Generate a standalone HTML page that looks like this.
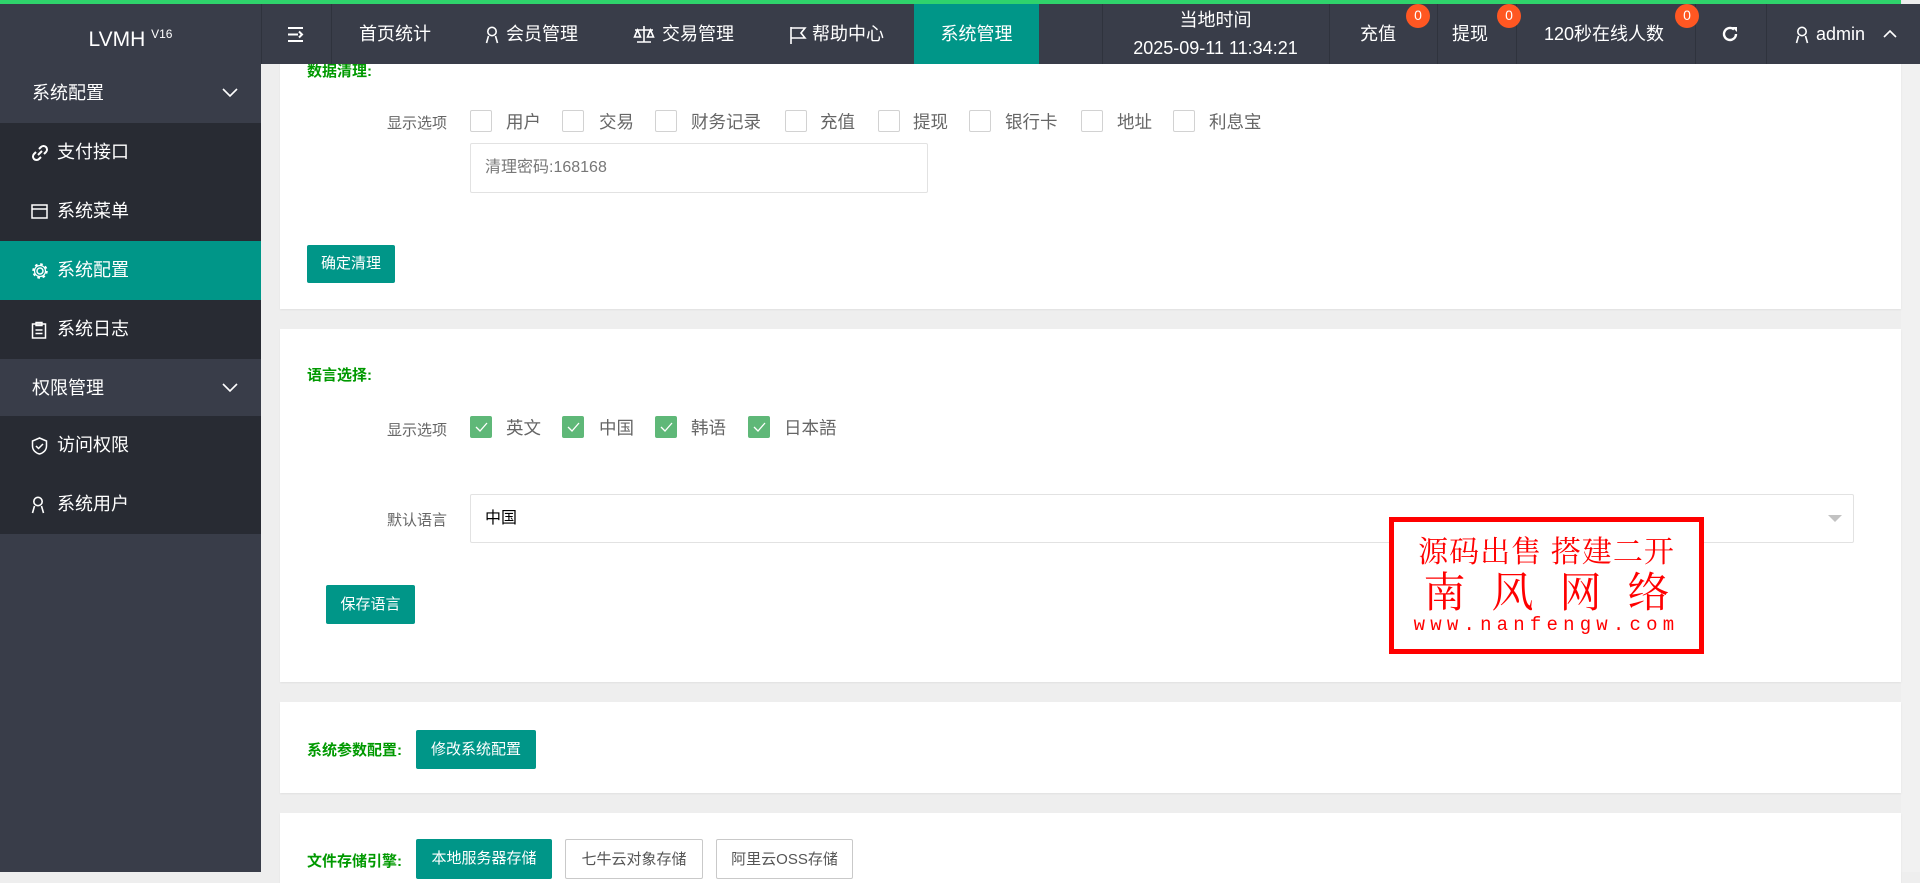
<!DOCTYPE html>
<html><head><meta charset="utf-8"><style>
*{box-sizing:border-box;margin:0;padding:0}
body{width:1920px;height:872px;overflow:hidden;background:#eee;font-family:"Liberation Sans","Noto Sans CJK SC",sans-serif;position:relative;color:#333}
.a{position:absolute}
.top{left:0;top:0;width:1901px;height:4px;background:#2fd36c;z-index:20}
.hdr{left:0;top:4px;width:1920px;height:60px;background:#393d49;color:#fff;font-size:18px;z-index:20}
.hi{position:absolute;top:0;height:60px;line-height:60px;white-space:nowrap}
.sep{position:absolute;top:0;width:1px;height:60px;background:#2f333d}
.side{left:0;top:64px;width:261px;height:808px;background:#393d49;z-index:20}
.si{position:absolute;left:0;width:261px;height:59px;line-height:59px;color:#fff;font-size:18px;padding-left:32px;background:#282b33}
.si.g{background:#393d49}
.si.act{background:#009688}
.si svg{position:absolute;left:31px;top:21px}
.si span{position:absolute;left:57px}
.card{background:#fff;left:280px;width:1621px;box-shadow:0 1px 2px rgba(0,0,0,.06)}
.lbl{position:absolute;font-size:15px;color:#666}
.cb{position:absolute;width:22px;height:22px;border:1px solid #d2d2d2;border-radius:2px;background:#fff}
.cb.on{background:#5fb878;border-color:#5fb878}
.ct{position:absolute;font-size:17.5px;color:#666}
.g1{position:absolute;color:#009900;font-weight:bold;font-size:15px}
.btn{position:absolute;background:#009688;color:#fff;font-size:15px;text-align:center;border-radius:2px}
.btn2{position:absolute;background:#fff;color:#555;border:1px solid #c9c9c9;font-size:15px;text-align:center;border-radius:2px}
.badge{position:absolute;top:0;width:24px;height:24px;border-radius:12px;background:#ff5722;color:#fff;font-size:14px;text-align:center;line-height:22px;z-index:5}
</style></head><body>
<div class="a top"></div>
<div class="a hdr">
  <div class="hi" style="left:0;width:261px;text-align:center;font-size:21px">LVMH <sup style="font-size:12px;vertical-align:8px">V16</sup></div>
  <div class="sep" style="left:261px"></div>
  <div class="sep" style="left:331px"></div>
  <svg class="a" style="left:287px;top:22px" width="18" height="17" viewBox="0 0 18 17"><path d="M1 2h15M1 8.5h10M1 15h15M12 5.5l3 3-3 3" stroke="#fff" stroke-width="2" fill="none"/></svg>
  <div class="hi" style="left:359px">首页统计</div>
  <svg class="a" style="left:485px;top:22px" width="14" height="18" viewBox="0 0 14 18"><circle cx="7" cy="5.5" r="4.2" stroke="#fff" stroke-width="1.6" fill="none"/><path d="M1.5 17l2-7M12.5 17l-2-7" stroke="#fff" stroke-width="1.6"/></svg>
  <div class="hi" style="left:506px">会员管理</div>
  <svg class="a" style="left:633px;top:21px" width="22" height="19" viewBox="0 0 22 19"><path d="M11 1v16M4 17h14M2 5h18M4.5 5l-3 7h6zM17.5 5l-3 7h6z" stroke="#fff" stroke-width="1.6" fill="none"/></svg>
  <div class="hi" style="left:662px">交易管理</div>
  <svg class="a" style="left:789px;top:22px" width="18" height="18" viewBox="0 0 18 18"><path d="M2 1v17M2 2h14l-4 5 4 5H2" stroke="#fff" stroke-width="1.6" fill="none"/></svg>
  <div class="hi" style="left:812px">帮助中心</div>
  <div class="hi" style="left:914px;width:125px;background:#009688;text-align:center">系统管理</div>
  <div class="sep" style="left:1102px"></div>
  <div class="hi" style="left:1102px;width:227px;text-align:center;line-height:28px;padding-top:2px">当地时间<br>2025-09-11 11:34:21</div>
  <div class="sep" style="left:1329px"></div>
  <div class="hi" style="left:1360px">充值</div><div class="badge" style="left:1406px">0</div>
  <div class="sep" style="left:1437px"></div>
  <div class="hi" style="left:1452px">提现</div><div class="badge" style="left:1497px">0</div>
  <div class="sep" style="left:1516px"></div>
  <div class="hi" style="left:1544px">120秒在线人数</div><div class="badge" style="left:1675px">0</div>
  <div class="sep" style="left:1695px"></div>
  <svg class="a" style="left:1721px;top:21px" width="18" height="18" viewBox="0 0 18 18"><path d="M15 9a6 6 0 1 1-2-4.5" stroke="#fff" stroke-width="2.4" fill="none"/><path d="M11 2h5v5z" fill="#fff"/></svg>
  <div class="sep" style="left:1766px"></div>
  <svg class="a" style="left:1795px;top:22px" width="14" height="18" viewBox="0 0 14 18"><circle cx="7" cy="5.5" r="4.2" stroke="#fff" stroke-width="1.6" fill="none"/><path d="M1.5 17l2-7M12.5 17l-2-7" stroke="#fff" stroke-width="1.6"/></svg>
  <div class="hi" style="left:1816px">admin</div>
  <svg class="a" style="left:1883px;top:25px" width="14" height="9" viewBox="0 0 14 9"><path d="M1 8l6-6 6 6" stroke="#fff" stroke-width="1.6" fill="none"/></svg>
</div>
<div class="a side">
  <div class="si g" style="top:0">系统配置<svg style="left:222px;top:24px" width="16" height="10" viewBox="0 0 16 10"><path d="M1 1l7 7 7-7" stroke="#fff" stroke-width="1.6" fill="none"/></svg></div>
  <div class="si" style="top:59px"><svg width="18" height="18" viewBox="0 0 18 18"><path d="M7 11l4-4M8 5l2-2a3 3 0 0 1 5 5l-2 2M10 13l-2 2a3 3 0 0 1-5-5l2-2" stroke="#fff" stroke-width="2" fill="none"/></svg><span>支付接口</span></div>
  <div class="si" style="top:118px"><svg width="17" height="17" viewBox="0 0 17 17"><rect x="1" y="2" width="15" height="13" stroke="#fff" stroke-width="1.5" fill="none"/><path d="M1 6h15" stroke="#fff" stroke-width="1.5"/></svg><span>系统菜单</span></div>
  <div class="si act" style="top:177px"><svg width="18" height="18" viewBox="0 0 18 18"><circle cx="9" cy="9" r="3" stroke="#fff" stroke-width="1.5" fill="none"/><circle cx="9" cy="9" r="6.5" stroke="#fff" stroke-width="2.5" stroke-dasharray="2.5 2.6" fill="none"/><circle cx="9" cy="9" r="5.5" stroke="#fff" stroke-width="1.2" fill="none"/></svg><span>系统配置</span></div>
  <div class="si" style="top:236px"><svg width="16" height="18" viewBox="0 0 16 18"><rect x="1.5" y="3" width="13" height="14" stroke="#fff" stroke-width="1.5" fill="none"/><path d="M5 1.5h6v3H5zM4.5 9h7M4.5 12.5h7" stroke="#fff" stroke-width="1.4" fill="none"/></svg><span>系统日志</span></div>
  <div class="si g" style="top:295px">权限管理<svg style="left:222px;top:24px" width="16" height="10" viewBox="0 0 16 10"><path d="M1 1l7 7 7-7" stroke="#fff" stroke-width="1.6" fill="none"/></svg></div>
  <div class="si" style="top:352px"><svg width="17" height="18" viewBox="0 0 17 18"><path d="M8.5 1l7 3v5c0 4-3 7-7 8-4-1-7-4-7-8V4z" stroke="#fff" stroke-width="1.5" fill="none"/><path d="M5 9l2.5 2.5L12 7" stroke="#fff" stroke-width="1.5" fill="none"/></svg><span>访问权限</span></div>
  <div class="si" style="top:411px"><svg width="14" height="18" viewBox="0 0 14 18"><circle cx="7" cy="5.5" r="4.2" stroke="#fff" stroke-width="1.6" fill="none"/><path d="M1.5 17l2-7M12.5 17l-2-7" stroke="#fff" stroke-width="1.6"/></svg><span>系统用户</span></div>
</div>
<div class="a" style="left:1901px;top:64px;width:19px;height:808px;background:#f1f1f1"></div>

<!-- card 1 -->
<div class="a card" style="top:0;height:309px"></div>
<div class="g1" style="left:307px;top:60px">数据清理:</div>
<div class="lbl" style="left:387px;top:112px">显示选项</div>
<div class="cb" style="left:470px;top:110px"></div><div class="ct" style="left:506px;top:109px">用户</div>
<div class="cb" style="left:562px;top:110px"></div><div class="ct" style="left:599px;top:109px">交易</div>
<div class="cb" style="left:655px;top:110px"></div><div class="ct" style="left:691px;top:109px">财务记录</div>
<div class="cb" style="left:785px;top:110px"></div><div class="ct" style="left:820px;top:109px">充值</div>
<div class="cb" style="left:878px;top:110px"></div><div class="ct" style="left:913px;top:109px">提现</div>
<div class="cb" style="left:969px;top:110px"></div><div class="ct" style="left:1005px;top:109px">银行卡</div>
<div class="cb" style="left:1081px;top:110px"></div><div class="ct" style="left:1117px;top:109px">地址</div>
<div class="cb" style="left:1173px;top:110px"></div><div class="ct" style="left:1209px;top:109px">利息宝</div>
<div class="a" style="left:470px;top:143px;width:458px;height:50px;border:1px solid #e2e2e2;border-radius:2px;font-size:16px;color:#777;line-height:48px;padding-left:14px">清理密码:168168</div>
<div class="btn" style="left:307px;top:245px;width:88px;height:38px;line-height:38px">确定清理</div>

<!-- card 2 -->
<div class="a card" style="top:329px;height:353px"></div>
<div class="g1" style="left:307px;top:364px">语言选择:</div>
<div class="lbl" style="left:387px;top:419px">显示选项</div>
<div class="cb on" style="left:470px;top:416px"><svg width="22" height="22" viewBox="0 0 22 22" style="position:absolute;left:-1px;top:-1px"><path d="M6 11l4 4 7-8" stroke="#fff" stroke-width="1.3" fill="none"/></svg></div><div class="ct" style="left:506px;top:415px">英文</div>
<div class="cb on" style="left:562px;top:416px"><svg width="22" height="22" viewBox="0 0 22 22" style="position:absolute;left:-1px;top:-1px"><path d="M6 11l4 4 7-8" stroke="#fff" stroke-width="1.3" fill="none"/></svg></div><div class="ct" style="left:599px;top:415px">中国</div>
<div class="cb on" style="left:655px;top:416px"><svg width="22" height="22" viewBox="0 0 22 22" style="position:absolute;left:-1px;top:-1px"><path d="M6 11l4 4 7-8" stroke="#fff" stroke-width="1.3" fill="none"/></svg></div><div class="ct" style="left:691px;top:415px">韩语</div>
<div class="cb on" style="left:748px;top:416px"><svg width="22" height="22" viewBox="0 0 22 22" style="position:absolute;left:-1px;top:-1px"><path d="M6 11l4 4 7-8" stroke="#fff" stroke-width="1.3" fill="none"/></svg></div><div class="ct" style="left:784px;top:415px">日本語</div>
<div class="lbl" style="left:387px;top:509px">默认语言</div>
<div class="a" style="left:470px;top:494px;width:1384px;height:49px;border:1px solid #e2e2e2;border-radius:2px;font-size:16px;color:#000;line-height:47px;padding-left:14px">中国</div>
<div class="a" style="left:1828px;top:515px;width:0;height:0;border-left:7px solid transparent;border-right:7px solid transparent;border-top:7px solid #c2c2c2"></div>
<div class="btn" style="left:326px;top:585px;width:89px;height:39px;line-height:39px">保存语言</div>

<!-- watermark -->
<div class="a" style="left:1389px;top:517px;width:315px;height:137px;border:5px solid #f00;background:#fff;color:#f00;font-family:'Noto Serif CJK SC','Liberation Serif',serif;text-align:center">
  <div style="font-size:30px;line-height:34px;margin-top:10px;white-space:nowrap;letter-spacing:1px">源码出售 搭建二开</div>
  <div style="font-size:42px;line-height:48px;letter-spacing:26px;margin-left:26px;white-space:nowrap">南风网络</div>
  <div style="font-family:'Liberation Mono',monospace;font-size:19px;line-height:22px;letter-spacing:5.2px;white-space:nowrap">www.nanfengw.com</div>
</div>

<!-- card 3 -->
<div class="a card" style="top:702px;height:91px"></div>
<div class="g1" style="left:307px;top:739px">系统参数配置:</div>
<div class="btn" style="left:416px;top:730px;width:120px;height:39px;line-height:39px">修改系统配置</div>

<!-- card 4 -->
<div class="a card" style="top:813px;height:70px"></div>
<div class="g1" style="left:307px;top:850px">文件存储引擎:</div>
<div class="btn" style="left:416px;top:839px;width:136px;height:40px;line-height:40px">本地服务器存储</div>
<div class="btn2" style="left:565px;top:839px;width:138px;height:40px;line-height:40px">七牛云对象存储</div>
<div class="btn2" style="left:716px;top:839px;width:137px;height:40px;line-height:40px">阿里云OSS存储</div>
</body></html>
